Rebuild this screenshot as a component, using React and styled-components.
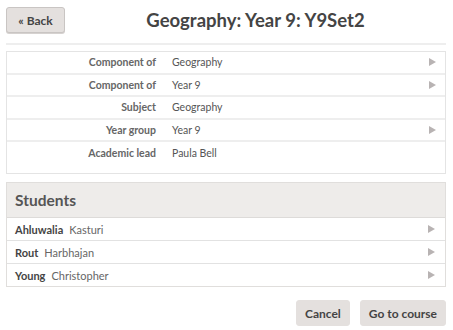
import React from "react";
import styled, { createGlobalStyle } from "styled-components";

const GlobalStyle = createGlobalStyle`
  body {
    margin: 0;
    background: #fff;
    font-family: Lato, "Open Sans", sans-serif;
    color: #555;
  }
`;

const Page = styled.div`
  padding: 7px 7px 8px 6px;
`;

const Header = styled.header`
  display: flex;
  align-items: center;
  padding-bottom: 10px;
  border-bottom: 2px solid #eeeeee;
`;

const Button = styled.button`
  height: 26px;
  padding: 0 8px;
  background: #e4e0de;
  border: 1px solid ${(p) => (p.$bordered ? "#c9c5c3" : "#e4e0de")};
  border-radius: 3px;
  font-family: inherit;
  font-size: 12px;
  font-weight: 700;
  color: #444;
  cursor: pointer;
`;

const BackButton = styled(Button)`
  width: 59px;
  box-shadow: 0 1px 0 #d6d2d0;
`;

const Title = styled.h1`
  flex: 1;
  margin: 0;
  text-align: center;
  font-size: 18.5px;
  font-weight: 700;
  color: #444;
`;

const DetailBox = styled.div`
  margin-top: 6px;
  border: 1px solid #e4e4e4;
`;

const DetailRow = styled.div`
  display: grid;
  grid-template-columns: 149px 1fr 16px;
  column-gap: 16px;
  align-items: center;
  height: ${(p) => (p.$last ? "31px" : "22.5px")};
  padding-bottom: ${(p) => (p.$last ? "9px" : "0")};
  box-sizing: border-box;
  border-bottom: ${(p) => (p.$last ? "none" : "2px solid #eeeeee")};
  font-size: 10.5px;
`;

const Label = styled.span`
  text-align: right;
  font-weight: 700;
  color: #666;
`;

const Value = styled.span`
  color: #555;
`;

const Arrow = styled.span`
  justify-self: start;
  width: 0;
  height: 0;
  border-top: 4px solid transparent;
  border-bottom: 4px solid transparent;
  border-left: 7px solid #b8b3b3;
`;

const Panel = styled.section`
  margin-top: 8px;
  border: 1px solid #e0dedc;
`;

const PanelHeader = styled.h2`
  margin: 0;
  height: 34px;
  display: flex;
  align-items: center;
  padding-left: 8px;
  background: #eeecea;
  border-bottom: 1px solid #dddbd9;
  font-size: 15.5px;
  font-weight: 700;
  color: #555;
`;

const StudentRow = styled.div`
  display: flex;
  align-items: center;
  height: 22px;
  padding: 0 10px 0 8px;
  border-bottom: ${(p) => (p.$last ? "none" : "1px solid #e2e2e2")};
  font-size: 11px;
`;

const Surname = styled.span`
  font-weight: 700;
  color: #444;
  margin-right: 6px;
`;

const Forename = styled.span`
  flex: 1;
  color: #666;
`;

const Footer = styled.div`
  display: flex;
  justify-content: flex-end;
  gap: 10px;
  margin-top: 13px;
`;

const details = [
  { label: "Component of", value: "Geography", link: true },
  { label: "Component of", value: "Year 9", link: true },
  { label: "Subject", value: "Geography" },
  { label: "Year group", value: "Year 9", link: true },
  { label: "Academic lead", value: "Paula Bell" },
];

const students = [
  ["Ahluwalia", "Kasturi"],
  ["Rout", "Harbhajan"],
  ["Young", "Christopher"],
];

export default function App() {
  return (
    <>
      <GlobalStyle />
      <Page>
        <Header>
          <BackButton $bordered>« Back</BackButton>
          <Title>Geography: Year 9: Y9Set2</Title>
        </Header>

        <DetailBox>
          {details.map((d, i) => (
            <DetailRow key={i} $last={i === details.length - 1}>
              <Label>{d.label}</Label>
              <Value>{d.value}</Value>
              {d.link ? <Arrow /> : <span />}
            </DetailRow>
          ))}
        </DetailBox>

        <Panel>
          <PanelHeader>Students</PanelHeader>
          {students.map(([last, first], i) => (
            <StudentRow key={last} $last={i === students.length - 1}>
              <Surname>{last}</Surname>
              <Forename>{first}</Forename>
              <Arrow />
            </StudentRow>
          ))}
        </Panel>

        <Footer>
          <Button>Cancel</Button>
          <Button>Go to course</Button>
        </Footer>
      </Page>
    </>
  );
}
